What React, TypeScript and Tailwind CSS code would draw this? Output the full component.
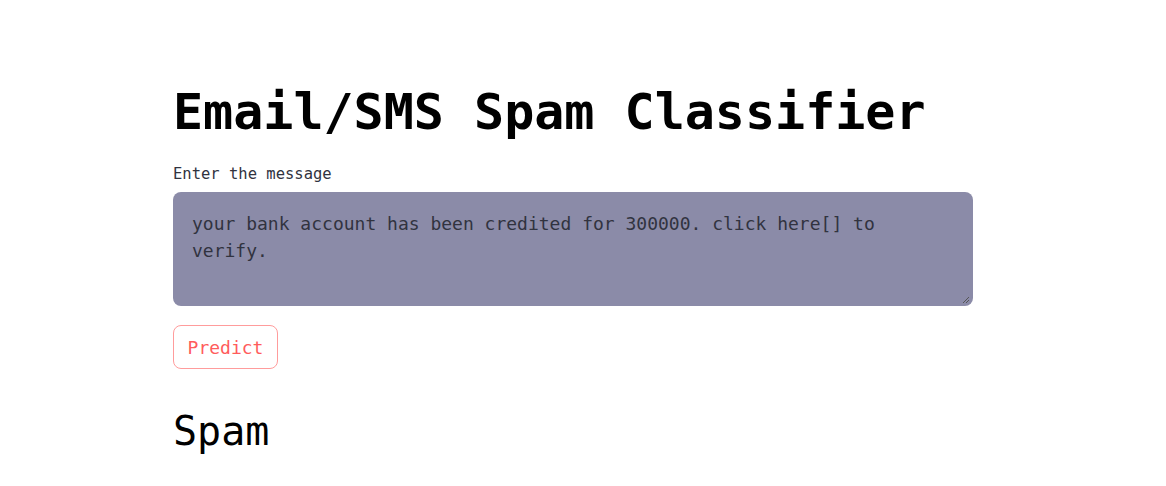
export default function App() {
  return (
    <main
      className="min-h-screen bg-white text-black"
      style={{ fontFamily: '"DejaVu Sans Mono", "Liberation Mono", monospace' }}
    >
      <div className="ml-[173px] w-[800px] pt-[84px]">
        {/* TITLE */}
        <h1 className="text-[50px] font-bold leading-[56px]">
          Email/SMS Spam Classifier
        </h1>

        {/* INPUT */}
        <label className="mt-[23px] block text-[15.5px] leading-[22px] text-[#31333f]">
          Enter the message
        </label>
        <div className="relative mt-[7px] h-[114px] w-[800px] rounded-lg bg-[#8b8ba8] px-[19px] pt-[18px]">
          <p className="text-[18px] leading-[27px] text-[#31333f]">
            your bank account has been credited for 300000. click here[] to verify.
          </p>
          <span className="absolute bottom-[2px] right-[3px] h-[8px] w-[8px]">
            <svg viewBox="0 0 8 8" className="h-full w-full">
              <path d="M7 1 L1 7 M7 4 L4 7" stroke="#555" strokeWidth="1" />
            </svg>
          </span>
        </div>

        {/* BUTTON */}
        <button className="mt-[19px] h-[44px] w-[105px] rounded-lg border border-[#ff9c9c] bg-white text-[18px] text-[#ff5c5c]">
          Predict
        </button>

        {/* RESULT */}
        <h2 className="mt-[38px] text-[40px] leading-[48px] font-normal">Spam</h2>
      </div>
    </main>
  );
}
